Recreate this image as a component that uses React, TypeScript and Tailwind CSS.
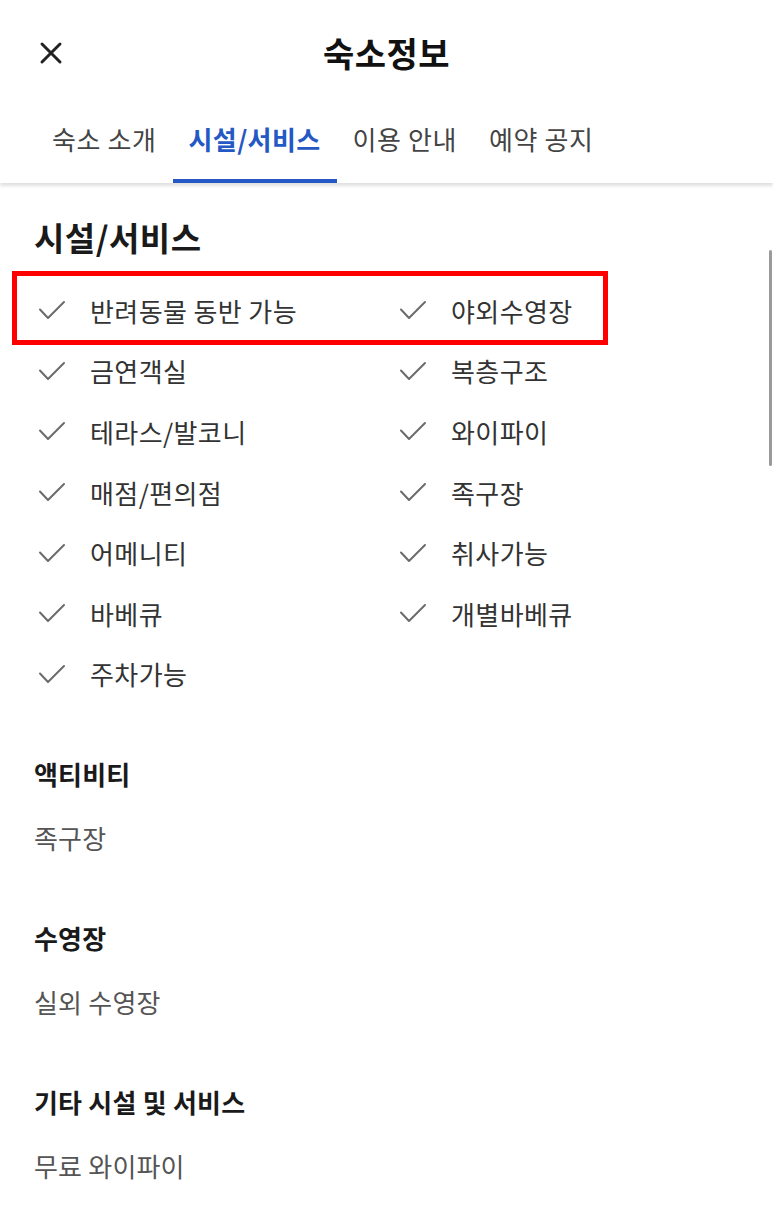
import { X } from "lucide-react";

const tabs = ["숙소 소개", "시설/서비스", "이용 안내", "예약 공지"];

const facilities = [
  "반려동물 동반 가능",
  "야외수영장",
  "금연객실",
  "복층구조",
  "테라스/발코니",
  "와이파이",
  "매점/편의점",
  "족구장",
  "어메니티",
  "취사가능",
  "바베큐",
  "개별바베큐",
  "주차가능",
];

const details = [
  { title: "액티비티", value: "족구장" },
  { title: "수영장", value: "실외 수영장" },
  { title: "기타 시설 및 서비스", value: "무료 와이파이" },
];

function Check() {
  return (
    <svg width="28" height="22" viewBox="0 0 28 22" fill="none" className="shrink-0">
      <path d="M2 10.5 L10 19 L26 3" stroke="#6b6b6b" strokeWidth="2" strokeLinecap="round" strokeLinejoin="round" />
    </svg>
  );
}

export default function App() {
  return (
    <div
      className="relative min-h-[1207px] w-[773px] overflow-hidden bg-white text-[#222]"
      style={{ fontFamily: '"Noto Sans CJK KR", "Noto Sans", sans-serif' }}
    >
      <header className="relative flex h-[104px] items-center justify-center">
        <X className="absolute left-[33px] top-[35px] h-[36px] w-[36px] text-[#222]" strokeWidth={2} />
        <h1 className="text-[34px] font-bold tracking-[0.5px] text-[#111]">숙소정보</h1>
      </header>

      <nav className="flex h-[79px] pl-[36px] shadow-[0_3px_3px_rgba(0,0,0,0.12)]">
        {tabs.map((t, i) => (
          <div
            key={t}
            className={
              i === 1
                ? "flex items-center border-b-[4px] border-[#2458c4] px-4 pb-[6px] text-[26px] font-bold tracking-[0.4px] text-[#2458c4]"
                : "flex items-center border-b-[4px] border-transparent px-4 pb-[6px] text-[26px] tracking-[0.6px] text-[#444]"
            }
          >
            {t}
          </div>
        ))}
      </nav>

      <main className="px-[34px]">
        <h2 className="mt-[32px] text-[33px] leading-[44px] font-bold tracking-[0.5px] text-[#1a1a1a]">시설/서비스</h2>

        <div className="relative mt-[21px] grid grid-cols-[361px_1fr] auto-rows-[60.6px]">
          <div className="absolute left-[-22px] top-[-9px] h-[74px] w-[596px] border-[5px] border-[#ff0000]" />
          {facilities.map((f) => (
            <div key={f} className="flex items-center gap-[24px] pl-[4px]">
              <Check />
              <span className="text-[26px] tracking-[0.4px] text-[#333]">{f}</span>
            </div>
          ))}
        </div>

        <div className="mt-[52px] flex flex-col">
          {details.map((d) => (
            <section key={d.title} className="mb-[64px] flex flex-col gap-[28px]">
              <h3 className="text-[26px] leading-[36px] font-bold tracking-[0.2px] text-[#1a1a1a]">{d.title}</h3>
              <p className="text-[26px] leading-[36px] tracking-[0.2px] text-[#555]">{d.value}</p>
            </section>
          ))}
        </div>
      </main>

      <div className="absolute right-[1px] top-[250px] h-[216px] w-[3px] rounded-full bg-[#9a9a9a]" />
    </div>
  );
}
